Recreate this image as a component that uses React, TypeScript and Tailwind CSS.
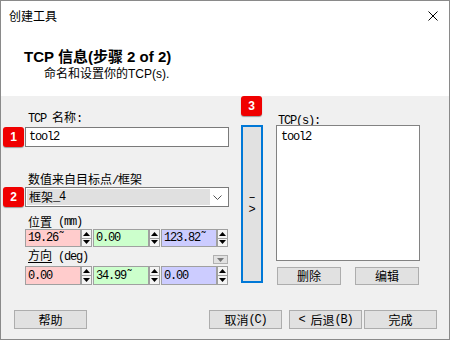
import React from "react";

const M = ({ children }: { children: React.ReactNode }) => (
  <span className="font-['Liberation_Mono'] text-[12px] tracking-[-1.2px] whitespace-pre">{children}</span>
);

const Badge = ({ n }: { n: string }) => (
  <div className="w-[21px] h-[20px] bg-[#f00000] rounded-[3px] shadow-[0_1px_1px_rgba(0,0,0,0.35)] flex items-center justify-center text-white font-bold text-[12px] font-['Liberation_Sans'] shrink-0">
    {n}
  </div>
);

const Spinner = () => (
  <div className="w-[11px] h-full flex flex-col shrink-0">
    <div className="flex-1 border border-[#a0a0a0] bg-[#f4f4f4] flex items-center justify-center">
      <svg width="7" height="4" viewBox="0 0 7 4"><polygon points="3.5,0 7,4 0,4" fill="#000" /></svg>
    </div>
    <div className="flex-1 border border-t-0 border-[#a0a0a0] bg-[#f4f4f4] flex items-center justify-center">
      <svg width="7" height="4" viewBox="0 0 7 4"><polygon points="0,0 7,0 3.5,4" fill="#000" /></svg>
    </div>
  </div>
);

const Field = ({ value, color, tilde }: { value: string; color: string; tilde?: boolean }) => (
  <div className={`w-[56px] h-full border border-[#a0a0a0] ${color} flex items-center pl-[2px] shrink-0 leading-none`}>
    <M>
      {value}
      {tilde ? "˜" : ""}
    </M>
  </div>
);

const Btn = ({ children, w }: { children: React.ReactNode; w: string }) => (
  <div className={`${w} h-full bg-[#e1e1e1] border border-[#adadad] flex items-center justify-center text-[12px] leading-none shrink-0 whitespace-pre`}>
    {children}
  </div>
);

export default function App() {
  return (
    <div className="w-[450px] h-[340px] border border-[#8a8a8a] flex flex-col bg-[#f0f0f0] text-black font-['Noto_Sans_CJK_SC',sans-serif] overflow-hidden">
      {/* header */}
      <div className="bg-white h-[95px] shrink-0 flex flex-col">
        <div className="h-[29px] flex items-center justify-between pl-[8px] pr-[11px]">
          <span className="text-[12px] leading-none">创建工具</span>
          <svg width="10" height="10" viewBox="0 0 10 10">
            <path d="M0.5 0.5 L9.5 9.5 M9.5 0.5 L0.5 9.5" stroke="#000" strokeWidth="1" />
          </svg>
        </div>
        <div className="pl-[23px] mt-[19px] text-[15px] leading-[16px] font-bold font-['Liberation_Sans','Noto_Sans_CJK_SC',sans-serif]">
          TCP 信息(步骤 2 of 2)
        </div>
        <div className="pl-[43px] mt-[1px] text-[12px] leading-[16px] font-['Liberation_Sans','Noto_Sans_CJK_SC',sans-serif]">
          命名和设置你的TCP(s).
        </div>
      </div>

      {/* body */}
      <div className="flex-1 flex flex-col">
        <div className="flex">
          {/* left column */}
          <div className="w-[228px] pl-[2px] flex flex-col text-[12px]">
            <div className="ml-[25px] mt-[13px] h-[16px] leading-[16px]">
              <M>TCP </M>名称<M>:</M>
            </div>
            <div className="mt-[2px] flex gap-[1px] h-[20px]">
              <Badge n="1" />
              <div className="w-[204px] h-full bg-white border border-[#7a7a7a] flex items-center pl-[3px]">
                <M>tool2</M>
              </div>
            </div>
            <div className="ml-[25px] mt-[24px] h-[16px] leading-[16px]">
              数值来自目标点<M>/</M>框架
            </div>
            <div className="flex gap-[1px] h-[20px]">
              <Badge n="2" />
              <div className="w-[204px] h-full bg-white border border-[#7a7a7a] flex items-center pl-[1px] pr-[6px]">
                <div className="w-[183px] h-[16px] bg-[#e0e0e0] flex items-center pl-[2px] leading-none">
                  框架<M>_4</M>
                </div>
                <div className="flex-1 flex justify-end">
                  <svg width="9" height="5" viewBox="0 0 9 5">
                    <polyline points="0.5,0.5 4.5,4.5 8.5,0.5" fill="none" stroke="#555" strokeWidth="1" />
                  </svg>
                </div>
              </div>
            </div>
            <div className="ml-[25px] mt-[8px] h-[14px] leading-[14px] flex">
              <span className="underline underline-offset-2">位置</span>
              <M> (mm)</M>
            </div>
            <div className="ml-[22px] h-[18px] flex">
              <Field value="19.26" color="bg-[#ffcccc]" tilde />
              <Spinner />
              <div className="w-[1px]" />
              <Field value="0.00" color="bg-[#ccffcc]" />
              <Spinner />
              <div className="w-[1px]" />
              <Field value="123.82" color="bg-[#ccccff]" tilde />
              <Spinner />
            </div>
            <div className="ml-[22px] h-[19px] flex items-end justify-between pr-[1px]">
              <div className="ml-[3px] leading-[16px] mb-[1px]">
                <span className="underline underline-offset-2">方向</span>
                <M> (deg)</M>
              </div>
              <div className="w-[15px] h-[9px] mb-[2px] bg-[#e1e1e1] border border-[#b0b0b0] flex items-center justify-center">
                <svg width="7" height="4" viewBox="0 0 7 4"><polygon points="0,0 7,0 3.5,4" fill="#777" /></svg>
              </div>
            </div>
            <div className="ml-[22px] h-[19px] flex">
              <Field value="0.00" color="bg-[#ffcccc]" />
              <Spinner />
              <div className="w-[1px]" />
              <Field value="34.99" color="bg-[#ccffcc]" tilde />
              <Spinner />
              <div className="w-[1px]" />
              <Field value="0.00" color="bg-[#ccccff]" />
              <Spinner />
            </div>
          </div>

          {/* arrow column */}
          <div className="ml-[12px] flex flex-col">
            <Badge n="3" />
            <div className="mt-[9px] w-[22px] h-[158px] border-2 border-[#0078d7] bg-[#e1e1e1] flex items-center justify-center">
              <span className="font-['Liberation_Mono'] text-[12px] leading-[12px] whitespace-pre text-center">
                {"–\n>"}
              </span>
            </div>
          </div>

          {/* right column */}
          <div className="ml-[13px] pt-[17px] flex flex-col text-[12px]">
            <div className="ml-[2px] h-[12px] leading-[12px]">
              <M>TCP(s):</M>
            </div>
            <div className="w-[144px] h-[136px] bg-white border border-[#828282] pl-[4px] pt-[2px] leading-[14px]">
              <M>tool2</M>
            </div>
            <div className="mt-[6px] ml-[1px] h-[18px] flex gap-[14px]">
              <Btn w="w-[64px]">删除</Btn>
              <Btn w="w-[64px]">编辑</Btn>
            </div>
          </div>
        </div>

        {/* bottom buttons */}
        <div className="mt-auto mb-[10px] h-[19px] flex pl-[13px] pr-[12px]">
          <Btn w="w-[73px]">帮助</Btn>
          <div className="flex-1" />
          <Btn w="w-[73px]">
            取消<M>(C)</M>
          </Btn>
          <div className="w-[7px]" />
          <Btn w="w-[73px]">
            <M>&lt; </M>后退<M>(B)</M>
          </Btn>
          <div className="w-[2px]" />
          <Btn w="w-[73px]">完成</Btn>
        </div>
      </div>
    </div>
  );
}
